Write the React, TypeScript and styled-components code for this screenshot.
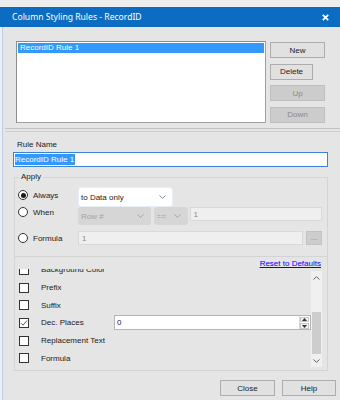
import React from "react";
import styled, { createGlobalStyle } from "styled-components";

const GlobalStyle = createGlobalStyle`
  html, body {
    margin: 0;
    padding: 0;
    background: #eeeeee;
  }
  body {
    font-family: "Liberation Sans", Arial, sans-serif;
    font-size: 8px;
    color: #1a1a1a;
  }
  * {
    box-sizing: border-box;
  }
`;

const rowItems = [
  { label: "Background Color", checked: false },
  { label: "Prefix", checked: false },
  { label: "Suffix", checked: false },
  { label: "Dec. Places", checked: true, value: "0" },
  { label: "Replacement Text", checked: false },
  { label: "Formula", checked: false },
];

const Chevron = ({ color = "#8c8c8c" }: { color?: string }) => (
  <svg width="7" height="4" viewBox="0 0 7 4">
    <path d="M0.5 0.5 L3.5 3.3 L6.5 0.5" fill="none" stroke={color} strokeWidth="1" />
  </svg>
);

const App = () => {
  return (
    <>
      <GlobalStyle />
      <Window>
        <TitleBar>
          <Title>Column Styling Rules - RecordID</Title>
          <svg width="7" height="7" viewBox="0 0 7 7">
            <path d="M0.8 0.8 L6.2 6.2 M6.2 0.8 L0.8 6.2" stroke="#fff" strokeWidth="1.7" />
          </svg>
        </TitleBar>
        <Body>
          <TopSection>
            <ListBox>
              <ListItem>RecordID Rule 1</ListItem>
            </ListBox>
            <ButtonColumn>
              <WinButton $w={55}>New</WinButton>
              <WinButton $w={43}>Delete</WinButton>
              <WinButton $w={55} disabled>
                Up
              </WinButton>
              <WinButton $w={55} disabled>
                Down
              </WinButton>
            </ButtonColumn>
          </TopSection>
          <Separator />
          <RuleSection>
            <FieldLabel>Rule Name</FieldLabel>
            <NameInput>
              <Selected>RecordID Rule 1</Selected>
            </NameInput>
          </RuleSection>
          <GroupBox>
            <Legend>Apply</Legend>
            <ApplyRow $h={20}>
              <RadioOption $mt={3}>
                <Radio $checked />
                Always
              </RadioOption>
              <Combo $w={95} $h={20}>
                <span>to Data only</span>
                <Chevron color="#7d8ba0" />
              </Combo>
            </ApplyRow>
            <ApplyRow $h={18}>
              <RadioOption $mt={0}>
                <Radio />
                When
              </RadioOption>
              <Combo $w={73} $h={18} $disabled>
                <span>Row #</span>
                <Chevron color="#a6a6a6" />
              </Combo>
              <Combo $w={34} $h={18} $disabled $ml={3}>
                <span>==</span>
                <Chevron color="#a6a6a6" />
              </Combo>
              <TextBox $w={133} $ml={2}>
                1
              </TextBox>
            </ApplyRow>
            <ApplyRow $h={14} $mt={6} $center>
              <RadioOption $mt={0}>
                <Radio />
                Formula
              </RadioOption>
              <TextBox $w={225}>1</TextBox>
              <EllipsisButton>...</EllipsisButton>
            </ApplyRow>
          </GroupBox>
          <OptionsPanel>
            <ResetRow>
              <ResetLink>Reset to Defaults</ResetLink>
            </ResetRow>
            <ListArea>
              <ItemsViewport>
                <ItemsInner>
                  {rowItems.map((item) => (
                    <ItemRow key={item.label}>
                      <CheckBox>
                        {item.checked && (
                          <svg width="8" height="8" viewBox="0 0 8 8">
                            <path d="M1 4.2 L3 6.2 L7 1.5" fill="none" stroke="#555" strokeWidth="1" />
                          </svg>
                        )}
                      </CheckBox>
                      <ItemLabel>{item.label}</ItemLabel>
                      {item.value !== undefined && (
                        <NumericInput>
                          <span>{item.value}</span>
                          <Spinner>
                            <SpinHalf>
                              <svg width="5" height="3" viewBox="0 0 5 3">
                                <path d="M0 3 L2.5 0 L5 3 Z" fill="#333" />
                              </svg>
                            </SpinHalf>
                            <SpinHalf>
                              <svg width="5" height="3" viewBox="0 0 5 3">
                                <path d="M0 0 L2.5 3 L5 0 Z" fill="#333" />
                              </svg>
                            </SpinHalf>
                          </Spinner>
                        </NumericInput>
                      )}
                    </ItemRow>
                  ))}
                </ItemsInner>
              </ItemsViewport>
              <ScrollBar>
                <ScrollArrow>
                  <svg width="7" height="4" viewBox="0 0 7 4">
                    <path d="M0.5 3.5 L3.5 0.7 L6.5 3.5" fill="none" stroke="#606060" strokeWidth="1" />
                  </svg>
                </ScrollArrow>
                <ScrollTrack>
                  <ScrollThumb />
                </ScrollTrack>
                <ScrollArrow>
                  <Chevron color="#606060" />
                </ScrollArrow>
              </ScrollBar>
            </ListArea>
          </OptionsPanel>
          <Footer>
            <WinButton $w={55}>Close</WinButton>
            <WinButton $w={54}>Help</WinButton>
          </Footer>
        </Body>
      </Window>
    </>
  );
};

const Window = styled.div`
  width: 340px;
  height: 400px;
  padding-top: 7px;
  display: flex;
  flex-direction: column;
  overflow: hidden;
`;

const TitleBar = styled.div`
  height: 20px;
  flex-shrink: 0;
  background: #0b6cc1;
  color: #ffffff;
  display: flex;
  align-items: center;
  justify-content: space-between;
  padding: 0 11px 0 12px;
`;

const Title = styled.span`
  font-family: "Noto Sans", "Open Sans", sans-serif;
  font-size: 8.6px;
`;

const Body = styled.div`
  flex: 1;
  background: #e5e5e5;
  margin-left: 2px;
  border-left: 1px solid #b9cfe8;
  display: flex;
  flex-direction: column;
`;

const TopSection = styled.div`
  display: flex;
  gap: 4px;
  padding: 14px 0 0 13px;
`;

const ListBox = styled.div`
  width: 250px;
  height: 82px;
  background: #ffffff;
  border: 1px solid #a0a0a0;
  border-top-color: #8c8c8c;
  border-left-color: #8c8c8c;
  padding: 1px;
`;

const ListItem = styled.div`
  height: 10px;
  line-height: 10px;
  background: #3399ff;
  color: #ffffff;
  padding-left: 2px;
`;

const ButtonColumn = styled.div`
  display: flex;
  flex-direction: column;
  gap: 5.5px;
  padding-top: 1px;
`;

const WinButton = styled.button<{ $w: number }>`
  width: ${(p) => p.$w}px;
  height: 16px;
  padding: 0;
  font-family: "Liberation Sans", Arial, sans-serif;
  font-size: 8px;
  color: #1a1a1a;
  background: #e1e1e1;
  border: 1px solid #adadad;
  border-radius: 0;

  &:disabled {
    background: #cccccc;
    border-color: #bfbfbf;
    color: #8a8a8a;
  }
`;

const Separator = styled.div`
  margin: 5px 0 0 2px;
  height: 4px;
  border-top: 1px solid #c2c2c2;
  border-bottom: 1px solid #cfcfcf;
`;

const RuleSection = styled.div`
  padding: 8px 0 0 10px;
`;

const FieldLabel = styled.div`
  padding-left: 4px;
  height: 10px;
  line-height: 10px;
`;

const NameInput = styled.div`
  margin-top: 2px;
  width: 315px;
  height: 15px;
  background: #ffffff;
  border: 1px solid #3c83d4;
  padding: 0 1px;
  display: flex;
  align-items: center;
`;

const Selected = styled.span`
  background: #3399ff;
  color: #ffffff;
  line-height: 11px;
  padding-right: 1px;
`;

const GroupBox = styled.fieldset`
  margin: 5px 0 0 11px;
  width: 314px;
  border: 1px solid #d4d4d4;
  padding: 5px 5px 11px 3px;
  min-width: 0;
`;

const Legend = styled.legend`
  margin-left: 1px;
  padding: 0 2px;
  line-height: 10px;
  font-size: 8px;
`;

const ApplyRow = styled.div<{ $h: number; $mt?: number; $center?: boolean }>`
  display: flex;
  align-items: ${(p) => (p.$center ? "center" : "flex-start")};
  height: ${(p) => p.$h}px;
  margin-top: ${(p) => p.$mt ?? 0}px;
`;

const RadioOption = styled.label<{ $mt: number }>`
  width: 60px;
  flex-shrink: 0;
  display: flex;
  align-items: center;
  gap: 5px;
  height: 10px;
  margin-top: ${(p) => p.$mt}px;
`;

const Radio = styled.span<{ $checked?: boolean }>`
  width: 10px;
  height: 10px;
  border-radius: 50%;
  border: 1px solid #333333;
  background: #ffffff;
  display: flex;
  align-items: center;
  justify-content: center;

  &::after {
    content: "";
    width: 5px;
    height: 5px;
    border-radius: 50%;
    background: ${(p) => (p.$checked ? "#1a1a1a" : "transparent")};
  }
`;

const Combo = styled.div<{ $w: number; $h: number; $disabled?: boolean; $ml?: number }>`
  width: ${(p) => p.$w}px;
  height: ${(p) => p.$h}px;
  margin-left: ${(p) => p.$ml ?? 0}px;
  display: flex;
  align-items: center;
  justify-content: space-between;
  padding: 0 6px 0 2px;
  border-radius: 3px;
  background: ${(p) => (p.$disabled ? "#d6d6d6" : "#ffffff")};
  color: ${(p) => (p.$disabled ? "#a3a3a3" : "#1a1a1a")};
  border: 1px solid ${(p) => (p.$disabled ? "#d6d6d6" : "#e8eef6")};
`;

const TextBox = styled.div<{ $w: number; $ml?: number }>`
  width: ${(p) => p.$w}px;
  height: 14px;
  margin-left: ${(p) => p.$ml ?? 0}px;
  background: #efefef;
  border: 1px solid #d9d9d9;
  color: #8a8a8a;
  padding: 0 3px;
  display: flex;
  align-items: center;
`;

const EllipsisButton = styled.div`
  width: 16px;
  height: 14px;
  margin-left: 3px;
  background: #cdcdcd;
  border: 1px solid #c2c2c2;
  color: #8a8a8a;
  display: flex;
  align-items: flex-end;
  justify-content: center;
  line-height: 10px;
  padding-bottom: 1px;
`;

const OptionsPanel = styled.div`
  margin-left: 11px;
  width: 314px;
  height: 114px;
  border: 1px solid #d4d4d4;
  border-top: none;
  padding: 2px 5px 0 3px;
  display: flex;
  flex-direction: column;
`;

const ResetRow = styled.div`
  display: flex;
  justify-content: flex-end;
  height: 10px;
  line-height: 10px;
  padding-right: 1px;
`;

const ResetLink = styled.a`
  color: #0000ff;
  text-decoration: underline;
  cursor: pointer;
`;

const ListArea = styled.div`
  display: flex;
  height: 99px;
`;

const ItemsViewport = styled.div`
  flex: 1;
  overflow: hidden;
`;

const ItemsInner = styled.div`
  margin-top: -8px;
`;

const ItemRow = styled.div`
  height: 17.7px;
  display: flex;
  align-items: center;
  padding-left: 1px;
`;

const CheckBox = styled.span`
  width: 10px;
  height: 10px;
  border: 1px solid #333333;
  background: #ffffff;
  display: flex;
  align-items: center;
  justify-content: center;
  flex-shrink: 0;
`;

const ItemLabel = styled.span`
  width: 85px;
  padding-left: 12px;
  flex-shrink: 0;
`;

const NumericInput = styled.div`
  width: 197px;
  height: 15px;
  background: #ffffff;
  border: 1px solid #b4b4b4;
  display: flex;
  align-items: center;
  justify-content: space-between;
  padding-left: 2px;
`;

const Spinner = styled.div`
  width: 10px;
  height: 13px;
  display: flex;
  flex-direction: column;
  border-left: 1px solid #d4d4d4;
  margin-right: 1px;
`;

const SpinHalf = styled.div`
  flex: 1;
  display: flex;
  align-items: center;
  justify-content: center;
  background: #f0f0f0;
  border: 1px solid #c8c8c8;
  margin: 0.5px 0;
`;

const ScrollBar = styled.div`
  width: 11px;
  margin-top: 2px;
  height: 96px;
  background: #f0f0f0;
  display: flex;
  flex-direction: column;
`;

const ScrollArrow = styled.div`
  height: 13px;
  display: flex;
  align-items: center;
  justify-content: center;
`;

const ScrollTrack = styled.div`
  flex: 1;
  display: flex;
  flex-direction: column;
  justify-content: flex-end;
`;

const ScrollThumb = styled.div`
  height: 42px;
  background: #cdcdcd;
  margin: 0 1px;
`;

const Footer = styled.div`
  display: flex;
  justify-content: flex-end;
  gap: 7px;
  padding: 9px 4px 0 0;
`;

export default App;
